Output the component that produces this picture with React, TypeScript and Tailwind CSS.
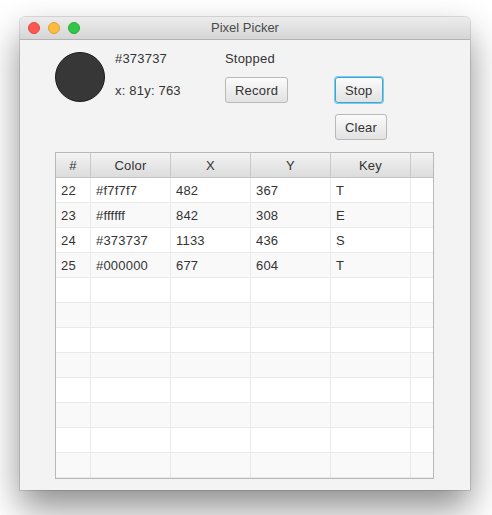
import React from 'react';

type Row = { n: string; color: string; x: string; y: string; key: string };

const rows: Row[] = [
  { n: '22', color: '#f7f7f7', x: '482', y: '367', key: 'T' },
  { n: '23', color: '#ffffff', x: '842', y: '308', key: 'E' },
  { n: '24', color: '#373737', x: '1133', y: '436', key: 'S' },
  { n: '25', color: '#000000', x: '677', y: '604', key: 'T' },
];

const cols = ['w-[35px]', 'w-[80px]', 'w-[80px]', 'w-[80px]', 'w-[80px]'];
const headers = ['#', 'Color', 'X', 'Y', 'Key'];

function Btn({ children, focused = false }: { children: React.ReactNode; focused?: boolean }) {
  return (
    <button
      className={`h-[26px] px-[9px] pt-[1px] rounded-[3px] text-[13px] tracking-[0.2px] text-[#333] bg-gradient-to-b from-[#fbfbfb] to-[#e2e2e2] border ${
        focused
          ? 'border-[#3aa7d8] shadow-[0_0_0_1px_#7ec8ea]'
          : 'border-[#b8b8b8]'
      }`}
    >
      {children}
    </button>
  );
}

export default function App() {
  const blanks = 9;
  const all: (Row | null)[] = [...rows, ...Array.from({ length: blanks }, () => null)];

  return (
    <div
      className="w-[492px] h-[515px] bg-white pt-[17px] pl-[20px] overflow-hidden"
      style={{ fontFamily: '"Liberation Sans", Arial, sans-serif' }}
    >
      <div className="w-[450px] h-[473px] rounded-t-[5px] bg-[#f3f3f3] flex flex-col shadow-[0_18px_36px_rgba(0,0,0,0.45),0_0_0_1px_rgba(0,0,0,0.12)]">
        {/* title bar */}
        <div className="h-[23px] shrink-0 rounded-t-[5px] bg-gradient-to-b from-[#ececec] to-[#d6d6d6] border-b border-[#b3b3b3] flex items-center px-[8px] relative">
          <div className="flex gap-[8px]">
            <span className="w-[12px] h-[12px] rounded-full bg-[#fc5753] border border-[#df4744]" />
            <span className="w-[12px] h-[12px] rounded-full bg-[#fdbc40] border border-[#de9f34]" />
            <span className="w-[12px] h-[12px] rounded-full bg-[#33c748] border border-[#27aa35]" />
          </div>
          <span className="absolute left-0 right-0 text-center text-[13px] text-[#4a4a4a] pointer-events-none">
            Pixel Picker
          </span>
        </div>

        {/* top controls */}
        <div className="h-[112px] shrink-0 flex pl-[35px] pt-[10px] text-[13px] tracking-[0.2px] text-[#333] leading-[16px]">
          <div className="w-[50px] h-[50px] mt-[2px] rounded-full bg-[#373737] border border-[#1c1c1c]" />
          <div className="w-[120px] pl-[10px] pt-[1px] flex flex-col gap-[16px]">
            <span>#373737</span>
            <span>x: 81y: 763</span>
          </div>
          <div className="w-[110px] flex flex-col items-start gap-[10px]">
            <span className="pt-[1px]">Stopped</span>
            <Btn>Record</Btn>
          </div>
          <div className="flex flex-col items-start gap-[11px] pt-[27px]">
            <Btn focused>Stop</Btn>
            <Btn>Clear</Btn>
          </div>
        </div>

        {/* table */}
        <div className="ml-[35px] w-[379px] h-[327px] border border-[#b9b9b9] bg-white overflow-hidden text-[13px] tracking-[0.2px] text-[#333]">
          <div className="flex h-[25px] bg-gradient-to-b from-[#f3f3f3] to-[#dcdcdc] border-b border-[#c4c4c4]">
            {headers.map((h, i) => (
              <div
                key={h}
                className={`${cols[i]} shrink-0 border-r border-[#c8c8c8] flex items-center justify-center pt-[2px]`}
              >
                {h}
              </div>
            ))}
            <div className="flex-1" />
          </div>
          {all.map((r, i) => (
            <div
              key={i}
              className={`flex h-[25px] border-b border-[#e9e9e9] ${i % 2 === 0 ? 'bg-white' : 'bg-[#f9f9f9]'}`}
            >
              {[r?.n, r?.color, r?.x, r?.y, r?.key].map((v, j) => (
                <div
                  key={j}
                  className={`${cols[j]} shrink-0 border-r border-[#e9e9e9] pl-[5px] pt-[2px] flex items-center`}
                >
                  {v ?? ''}
                </div>
              ))}
              <div className="flex-1" />
            </div>
          ))}
        </div>
      </div>
    </div>
  );
}
